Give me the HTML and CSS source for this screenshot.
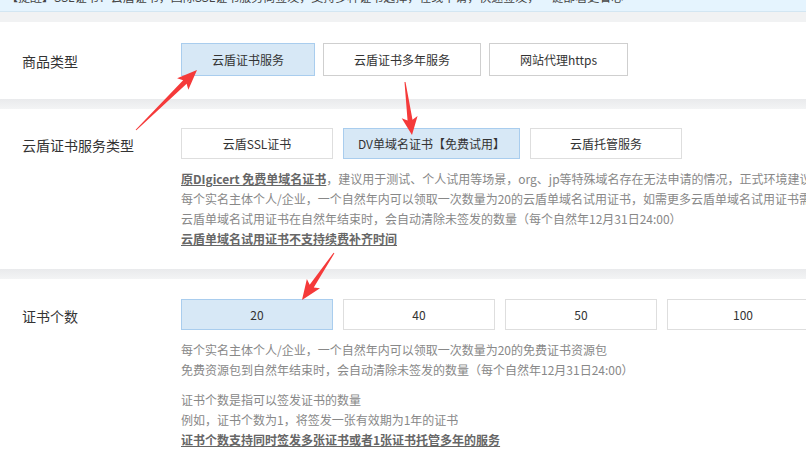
FILE: index.html
```
<!DOCTYPE html>
<html lang="zh-CN">

<head>
    <meta charset="UTF-8">
    <meta name="viewport" content="width=device-width, initial-scale=1.0">
    <title>云盾证书</title>
    <link rel="stylesheet" href="styles.css">
</head>

<body>
    <div class="notice">
        <p>【提醒】SSL证书：云盾证书，国际SSL证书服务商签发，支持多种证书选择，在线申请，快速签发，一键部署更省心</p>
    </div>
    <div class="divider"></div>

    <div class="section section-first">
        <div class="row">
            <div class="label">商品类型</div>
            <div class="opts opts-tight">
                <div class="opt active">云盾证书服务</div>
                <div class="opt">云盾证书多年服务</div>
                <div class="opt">网站代理https</div>
            </div>
        </div>
    </div>
    <div class="divider"></div>

    <div class="section section-type">
        <div class="row">
            <div class="label">云盾证书服务类型</div>
            <div class="body">
                <div class="opts">
                    <div class="opt opt-wide">云盾SSL证书</div>
                    <div class="opt opt-wide active">DV单域名证书【免费试用】</div>
                    <div class="opt opt-wide">云盾托管服务</div>
                </div>
                <div class="desc">
                    <p><b>原DIgicert 免费单域名证书</b>，建议用于测试、个人试用等场景，org、jp等特殊域名存在无法申请的情况，正式环境建议使用付费证书</p>
                    <p>每个实名主体个人/企业，一个自然年内可以领取一次数量为20的云盾单域名试用证书，如需更多云盾单域名试用证书需要购买资源包</p>
                    <p>云盾单域名试用证书在自然年结束时，会自动清除未签发的数量（每个自然年12月31日24:00）</p>
                    <p><b>云盾单域名试用证书不支持续费补齐时间</b></p>
                </div>
            </div>
        </div>
    </div>
    <div class="divider"></div>

    <div class="section section-count">
        <div class="row">
            <div class="label">证书个数</div>
            <div class="body">
                <div class="opts">
                    <div class="opt opt-fixed active">20</div>
                    <div class="opt opt-fixed">40</div>
                    <div class="opt opt-fixed">50</div>
                    <div class="opt opt-fixed">100</div>
                </div>
                <div class="desc">
                    <p>每个实名主体个人/企业，一个自然年内可以领取一次数量为20的免费证书资源包</p>
                    <p>免费资源包到自然年结束时，会自动清除未签发的数量（每个自然年12月31日24:00）</p>
                </div>
                <div class="desc desc-next">
                    <p>证书个数是指可以签发证书的数量</p>
                    <p>例如，证书个数为1，将签发一张有效期为1年的证书</p>
                    <p><b>证书个数支持同时签发多张证书或者1张证书托管多年的服务</b></p>
                </div>
            </div>
        </div>
    </div>

    <!-- red arrows drawn over the page -->
    <svg class="arrows" width="806" height="462" viewBox="0 0 806 462">
        <polygon points="136.35,130.36 186.63,83.70 188.35,89.72 197,70 177.13,78.32 183.13,80.14 135.65,129.64" />
        <polygon points="404.50,82.07 407.55,120.46 401.71,118.21 412,135 417.57,116.11 412.51,119.80 405.50,81.93" />
        <polygon points="333.59,252.71 309.67,284.63 306.88,279.02 302,300 320.0,288.18 313.77,287.49 334.41,253.29" />
    </svg>
</body>

</html>
```

FILE: styles.css
```
* {
    margin: 0;
    padding: 0;
    box-sizing: border-box;
}

html,
body {
    height: 100%;
    background-color: #fff;
}

body {
    position: relative;
    overflow: hidden;
    font-family: "Noto Sans CJK SC", "Liberation Sans", sans-serif;
    font-size: 12px;
    color: #333;
}

.notice {
    height: 12px;
    overflow: hidden;
    background-color: #e5f4fe;
    border-bottom: 1px solid #d3e6f2;
}

.notice p {
    margin-top: -12px;
    padding-left: 6px;
    line-height: 18px;
    white-space: nowrap;
    color: #444;
}

.divider {
    height: 10px;
    background: linear-gradient(#e9eaec, #f3f4f5);
}

.notice + .divider {
    background: #f1f2f3;
}

.section {
    background-color: #fff;
}

.section-first {
    padding: 21px 0;
}

.section-type {
    padding: 19px 0 20px;
}

.section-count {
    padding: 20px 0 0;
}

.row {
    display: flex;
}

.label {
    flex: none;
    width: 181px;
    padding-left: 22px;
    margin-top: 2px;
    line-height: 31px;
    font-size: 14px;
    color: #333;
}

.section-first .label {
    line-height: 33px;
}

.body {
    flex: none;
}

.opts {
    display: flex;
    gap: 10px;
}

.opts-tight {
    gap: 8px;
}

.opt {
    flex: none;
    height: 31px;
    line-height: 29px;
    padding: 0 30px;
    border: 1px solid #dedede;
    background-color: #fff;
    text-align: center;
    white-space: nowrap;
    color: #333;
}

.section-first .opt {
    height: 33px;
    line-height: 31px;
    border-color: #cfcfcf;
}

.opt-wide {
    min-width: 152px;
    padding: 0 14px;
}

.opt-fixed {
    width: 152px;
    padding: 0;
}

.opt.active {
    background-color: #d7e8f6;
    border-color: #a9cdee;
}

.desc {
    margin-top: 10px;
    white-space: nowrap;
    color: #888;
}

.desc p {
    line-height: 20px;
}

.desc b {
    color: #666;
    text-decoration: underline;
}

.desc-next {
    margin-top: 10px;
}

.arrows {
    position: absolute;
    top: 0;
    left: 0;
    pointer-events: none;
}

.arrows polygon {
    fill: #f53a3a;
}
```
